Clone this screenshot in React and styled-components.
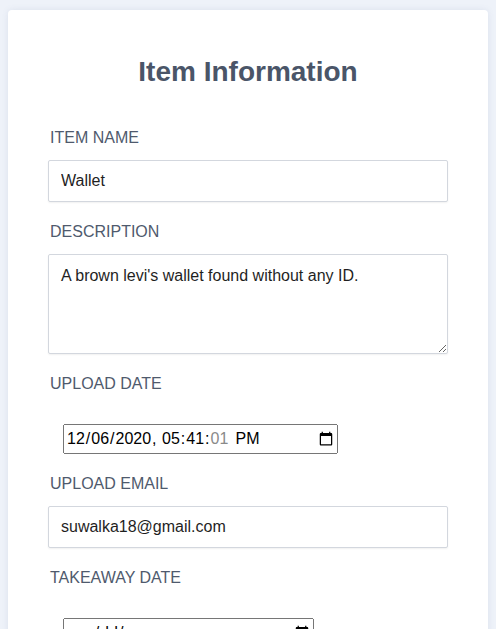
import React, { Component } from 'react'
import styled, { createGlobalStyle } from 'styled-components'

const GlobalStyle = createGlobalStyle`
    body {
        margin: 0;
        background: #eef2f9;
        font-family: "Liberation Sans", Arial, sans-serif;
    }
`

const Page = styled.div`
    padding: 10px 8px 40px;
`

const Card = styled.div`
    background: #fff;
    border-radius: 4px;
    box-shadow: 0 0 6px rgba(90, 110, 150, 0.12);
    padding: 46px 40px 40px;
`

const Title = styled.h1`
    margin: 0 0 41px;
    font-size: 28px;
    line-height: 32px;
    font-weight: 700;
    text-align: center;
    color: #4a5568;
`

const Form = styled.div`
    display: flex;
    flex-direction: column;
    gap: 21px;
`

const Field = styled.div`
    display: flex;
    flex-direction: column;
    align-items: flex-start;
`

const Label = styled.label`
    display: block;
    padding-left: 2px;
    font-size: 16px;
    line-height: 18px;
    color: #4f5a6d;
    margin-bottom: 13px;
`

const InputText = styled.input`
    box-sizing: border-box;
    width: 100%;
    height: 42px;
    padding: 0 12px;
    border: 1px solid #d3d7de;
    border-radius: 2px;
    box-shadow: 0 1px 2px rgba(0, 0, 0, 0.06);
    font-family: inherit;
    font-size: 16px;
    color: #1f1f1f;
    outline: none;
`

const TextArea = styled.textarea`
    box-sizing: border-box;
    width: 100%;
    height: 100px;
    padding: 12px;
    border: 1px solid #d3d7de;
    border-radius: 2px;
    box-shadow: 0 1px 2px rgba(0, 0, 0, 0.06);
    font-family: inherit;
    font-size: 16px;
    line-height: 18px;
    color: #1f1f1f;
    outline: none;
`

const DateInput = styled.input`
    margin: 18px 0 0 15px;
    width: ${p => p.$width}px;
    height: 30px;
    box-sizing: border-box;
    font-family: "Liberation Sans", Arial, sans-serif;
    font-size: 16px;
    color: #000;

    &::-webkit-datetime-edit-second-field {
        color: #8a8a8a;
    }
    &::-webkit-datetime-edit-ampm-field {
        margin-left: 2px;
    }
`

class ItemInfo extends Component {
    constructor(props) {
        super(props)

        this.state = {
            name: 'Wallet',
            description: "A brown levi's wallet found without any ID.",
            uploadDate: '2020-12-06T17:41:01',
            email: 'suwalka18@gmail.com',
            takeaway: '',
        }
    }

    handleChange = key => event => {
        this.setState({ [key]: event.target.value })
    }

    render() {
        const { name, description, uploadDate, email, takeaway } = this.state
        return (
            <Page>
                <GlobalStyle />
                <Card>
                    <Title>Item Information</Title>
                    <Form>
                        <Field>
                            <Label>ITEM NAME</Label>
                            <InputText type="text" value={name} onChange={this.handleChange('name')} />
                        </Field>
                        <Field>
                            <Label>DESCRIPTION</Label>
                            <TextArea value={description} onChange={this.handleChange('description')} />
                        </Field>
                        <Field>
                            <Label>UPLOAD DATE</Label>
                            <DateInput
                                type="datetime-local"
                                step="1"
                                $width={275}
                                value={uploadDate}
                                onChange={this.handleChange('uploadDate')}
                            />
                        </Field>
                        <Field>
                            <Label>UPLOAD EMAIL</Label>
                            <InputText type="text" value={email} onChange={this.handleChange('email')} />
                        </Field>
                        <Field>
                            <Label>TAKEAWAY DATE</Label>
                            <DateInput
                                type="date"
                                $width={251}
                                value={takeaway}
                                onChange={this.handleChange('takeaway')}
                            />
                        </Field>
                    </Form>
                </Card>
            </Page>
        )
    }
}

export default ItemInfo
